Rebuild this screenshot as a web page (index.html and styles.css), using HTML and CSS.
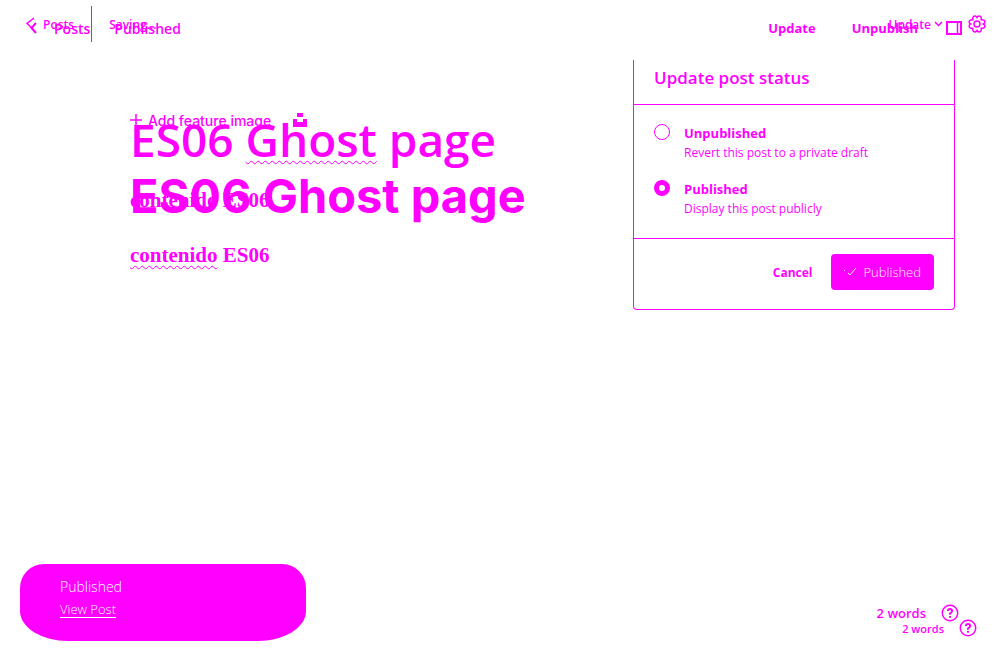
FILE: index.html
```html
<!DOCTYPE html>
<html lang="en">
<head>
<meta charset="utf-8">
<meta name="viewport" content="width=device-width, initial-scale=1">
<title>ES06 Ghost page</title>
<link rel="stylesheet" href="styles.css">
</head>
<body>
<div class="stage">
  <section class="layer layer-old">
    <header class="bar">
      <a class="back" href="#"><svg width="10" height="14" viewBox="0 0 10 14"><path d="M8 1L1 6.500L8 13"/></svg>Posts</a>
      <span class="divider"></span>
      <span class="state">Saving...</span>
      <button class="update push">Update<svg width="9" height="6" viewBox="0 0 9 6"><path d="M1 1l3.500 3.500L8 1"/></svg></button>
      <button class="gear" aria-label="Settings"><svg width="18" height="18" viewBox="0 0 18 18"><path d="M9 2.500C10 .8 12.200.5 13 2.200c.5 1 .2 1.800.2 2.600.9 0 1.700-.2 2.700.4 1.600 1 1.200 2.900-.6 3.800 1.800.9 2.200 2.800.6 3.800-1 .6-1.800.4-2.700.4 0 .8.300 1.600-.2 2.600-.8 1.700-3 1.400-4-.3-1 1.700-3.200 2-4 .3-.5-1-.2-1.800-.2-2.600-.9 0-1.700.2-2.700-.4C.5 11.800.9 9.900 2.700 9 .9 8.100.5 6.200 2.100 5.200c1-.6 1.800-.4 2.700-.4 0-.8-.3-1.600.2-2.600.8-1.700 3-1.400 4 .3z"/><circle cx="9" cy="9" r="3"/></svg></button>
    </header>
    <main class="editor">
      <h1 class="title">ES06 <span class="wavy">Ghost</span> page</h1>
      <p class="content">contenido ES06</p>
    </main>
    <footer class="foot"><span>2 words</span><button aria-label="Help"><svg width="18" height="18" viewBox="0 0 18 18"><circle cx="9" cy="9" r="7.700"/><path class="thick" d="M6.800 7Q7 5 9 5t2.200 2Q11.200 8 9 9.500v1.300M9 12v1.800"/></svg></button></footer>
  </section>
  <section class="layer layer-new">
    <header class="bar">
      <a class="back" href="#"><svg width="7" height="12" viewBox="0 0 7 12"><path class="thick" d="M6 1L1.500 6L6 11"/></svg>Posts</a>
      <span class="state">Published</span>
      <button class="push">Update</button>
      <button class="unpublish">Unpublish</button>
      <button class="side" aria-label="Toggle sidebar"><svg width="16" height="14" viewBox="0 0 16 14"><path class="thick" d="M1 1h14v12H1z"/><path d="M11.500 1v12"/></svg></button>
    </header>
    <main class="editor">
      <div class="feature">
        <button class="add"><svg width="12" height="12" viewBox="0 0 12 12"><path d="M6 0v12M0 6h12"/></svg>Add feature image</button>
        <button aria-label="Unsplash"><svg width="14" height="14" viewBox="0 0 14 14"><path class="solid" d="M4 0h6v4H4zM0 6h4v3h6V6h4v8H0z"/></svg></button>
      </div>
      <h1 class="title">ES06 Ghost page</h1>
      <p class="content"><span class="wavy">contenido</span> ES06</p>
    </main>
    <footer class="foot"><span>2 words</span><button aria-label="Help"><svg width="18" height="18" viewBox="0 0 18 18"><circle cx="9" cy="9" r="7.700"/><path class="thick" d="M6.800 7Q7 5 9 5t2.200 2Q11.200 8 9 9.500v1.300M9 12v1.800"/></svg></button></footer>
  </section>

  <form class="panel">
    <h2 class="panel-title">Update post status</h2>
    <div class="options">
      <label class="option"><input type="radio" name="status"><span><strong>Unpublished</strong><small>Revert this post to a private draft</small></span></label>
      <label class="option"><input type="radio" name="status" checked><span><strong>Published</strong><small>Display this post publicly</small></span></label>
    </div>
    <div class="actions">
      <button type="button" class="cancel">Cancel</button>
      <button type="button" class="primary"><svg width="14" height="12" viewBox="0 0 14 12"><path d="M4 7l2 2L12 2M0 4.500h1"/></svg>Published</button>
    </div>
  </form>

  <aside class="toast"><span>Published</span><a href="#">View Post</a></aside>
</div>
</body>
</html>
```
FILE: styles.css
```css
:root { --ink: #ff00ff; --paper: #ffffff; }
* { box-sizing: border-box; }
body { margin: 0; background: var(--paper); color: var(--ink); font-family: "Open Sans", "Noto Sans", sans-serif; font-size: 14px; }
h1, h2, p { margin: 0; }
button { margin: 0; padding: 0; border: 0; background: none; color: inherit; font: inherit; cursor: pointer; }
a { color: inherit; text-decoration: none; }
svg { display: block; flex: none; fill: none; stroke: currentColor; stroke-width: 1.5; }
.thick { stroke-width: 2; }
.solid { fill: currentColor; stroke: none; }

.stage { position: relative; display: grid; min-height: 100vh; }
.layer { grid-area: 1 / 1; display: flex; flex-direction: column; }
.bar { display: flex; align-items: center; }
.back { display: flex; align-items: center; }
.push { margin-left: auto; }
.editor { flex: 1; padding: 0 130px; }
.title { font-size: 47px; line-height: 60px; }
.content { font-family: "Liberation Serif", serif; font-size: 21px; font-weight: 700; line-height: 30px; }
.foot { display: flex; align-items: center; justify-content: flex-end; }
.wavy { text-decoration: underline wavy 1px; text-decoration-skip-ink: none; text-underline-offset: 3px; }

.layer-old .bar { height: 48px; padding: 0 14px 0 26px; font-size: 12px; font-weight: 600; }
.layer-old .back { gap: 7px; }
.divider { width: 1px; height: 36px; margin: 0 17px; background: var(--ink); }
.update { display: flex; align-items: center; gap: 3px; margin-right: 25px; }
.layer-old .editor { padding-top: 61px; }
.layer-old .title { font-size: 46px; font-weight: 600; }
.layer-old .content { margin-top: 16px; }
.layer-old .foot { gap: 15px; padding: 0 23px 23px; font-size: 11px; font-weight: 600; }

.layer-new .bar { height: 56px; padding: 0 38px 0 30px; font-weight: 600; }
.layer-new .back { gap: 17px; margin-right: 24px; }
.layer-new button { font-weight: 700; }
.layer-new .bar button { font-size: 13px; }
.unpublish { margin: 0 28px 0 36px; }
.layer-new .editor { padding-top: 53px; }
.feature { display: flex; align-items: center; gap: 22px; height: 22px; font-family: Inter, sans-serif; }
.layer-new .add { display: flex; align-items: center; gap: 6px; font-weight: 500; }
.layer-new .title { margin-top: 35px; font-family: Inter, sans-serif; font-weight: 700; }
.layer-new .content { margin-top: 14px; }
.layer-new .foot { gap: 15px; padding: 0 41px 38px; font-size: 13px; font-weight: 600; }

.panel { position: absolute; top: 60px; right: 45px; width: 322px; border: 1px solid var(--ink); border-top: 0; border-radius: 0 0 4px 4px; background: var(--paper); }
.panel-title { height: 45px; padding-left: 20px; border-bottom: 1px solid var(--ink); font-size: 17px; font-weight: 600; line-height: 36px; }
.options { display: grid; gap: 16px; padding: 18px 20px 19px; border-bottom: 1px solid var(--ink); }
.option { display: flex; gap: 14px; }
.option input { appearance: none; flex: none; width: 16px; height: 16px; margin: 1px 0 0; border: 1px solid var(--ink); border-radius: 50%; }
.option input:checked { border-width: 5px; }
.option strong, .option small { display: block; font-size: 13px; line-height: 20px; }
.option small { font-size: 12px; font-weight: 500; }
.actions { display: flex; align-items: center; justify-content: flex-end; gap: 19px; padding: 15px 20px 19px; }
.cancel { font-size: 12px; font-weight: 700; }
.primary { display: flex; align-items: center; gap: 5px; height: 36px; padding: 0 13px; border-radius: 4px; background: var(--ink); color: var(--paper); font-size: 13px; font-weight: 300; }
.primary svg { stroke-width: 1; }

.toast { position: absolute; left: 20px; bottom: 19px; display: flex; flex-direction: column; align-items: flex-start; width: 286px; padding: 12px 40px 21px; border-radius: 24px 24px 48px 48px / 24px 24px 30px 30px; background: var(--ink); color: var(--paper); font-size: 14px; font-weight: 300; line-height: 22px; }
.toast a { font-size: 13px; text-decoration: underline; text-underline-offset: 3px; }
```
